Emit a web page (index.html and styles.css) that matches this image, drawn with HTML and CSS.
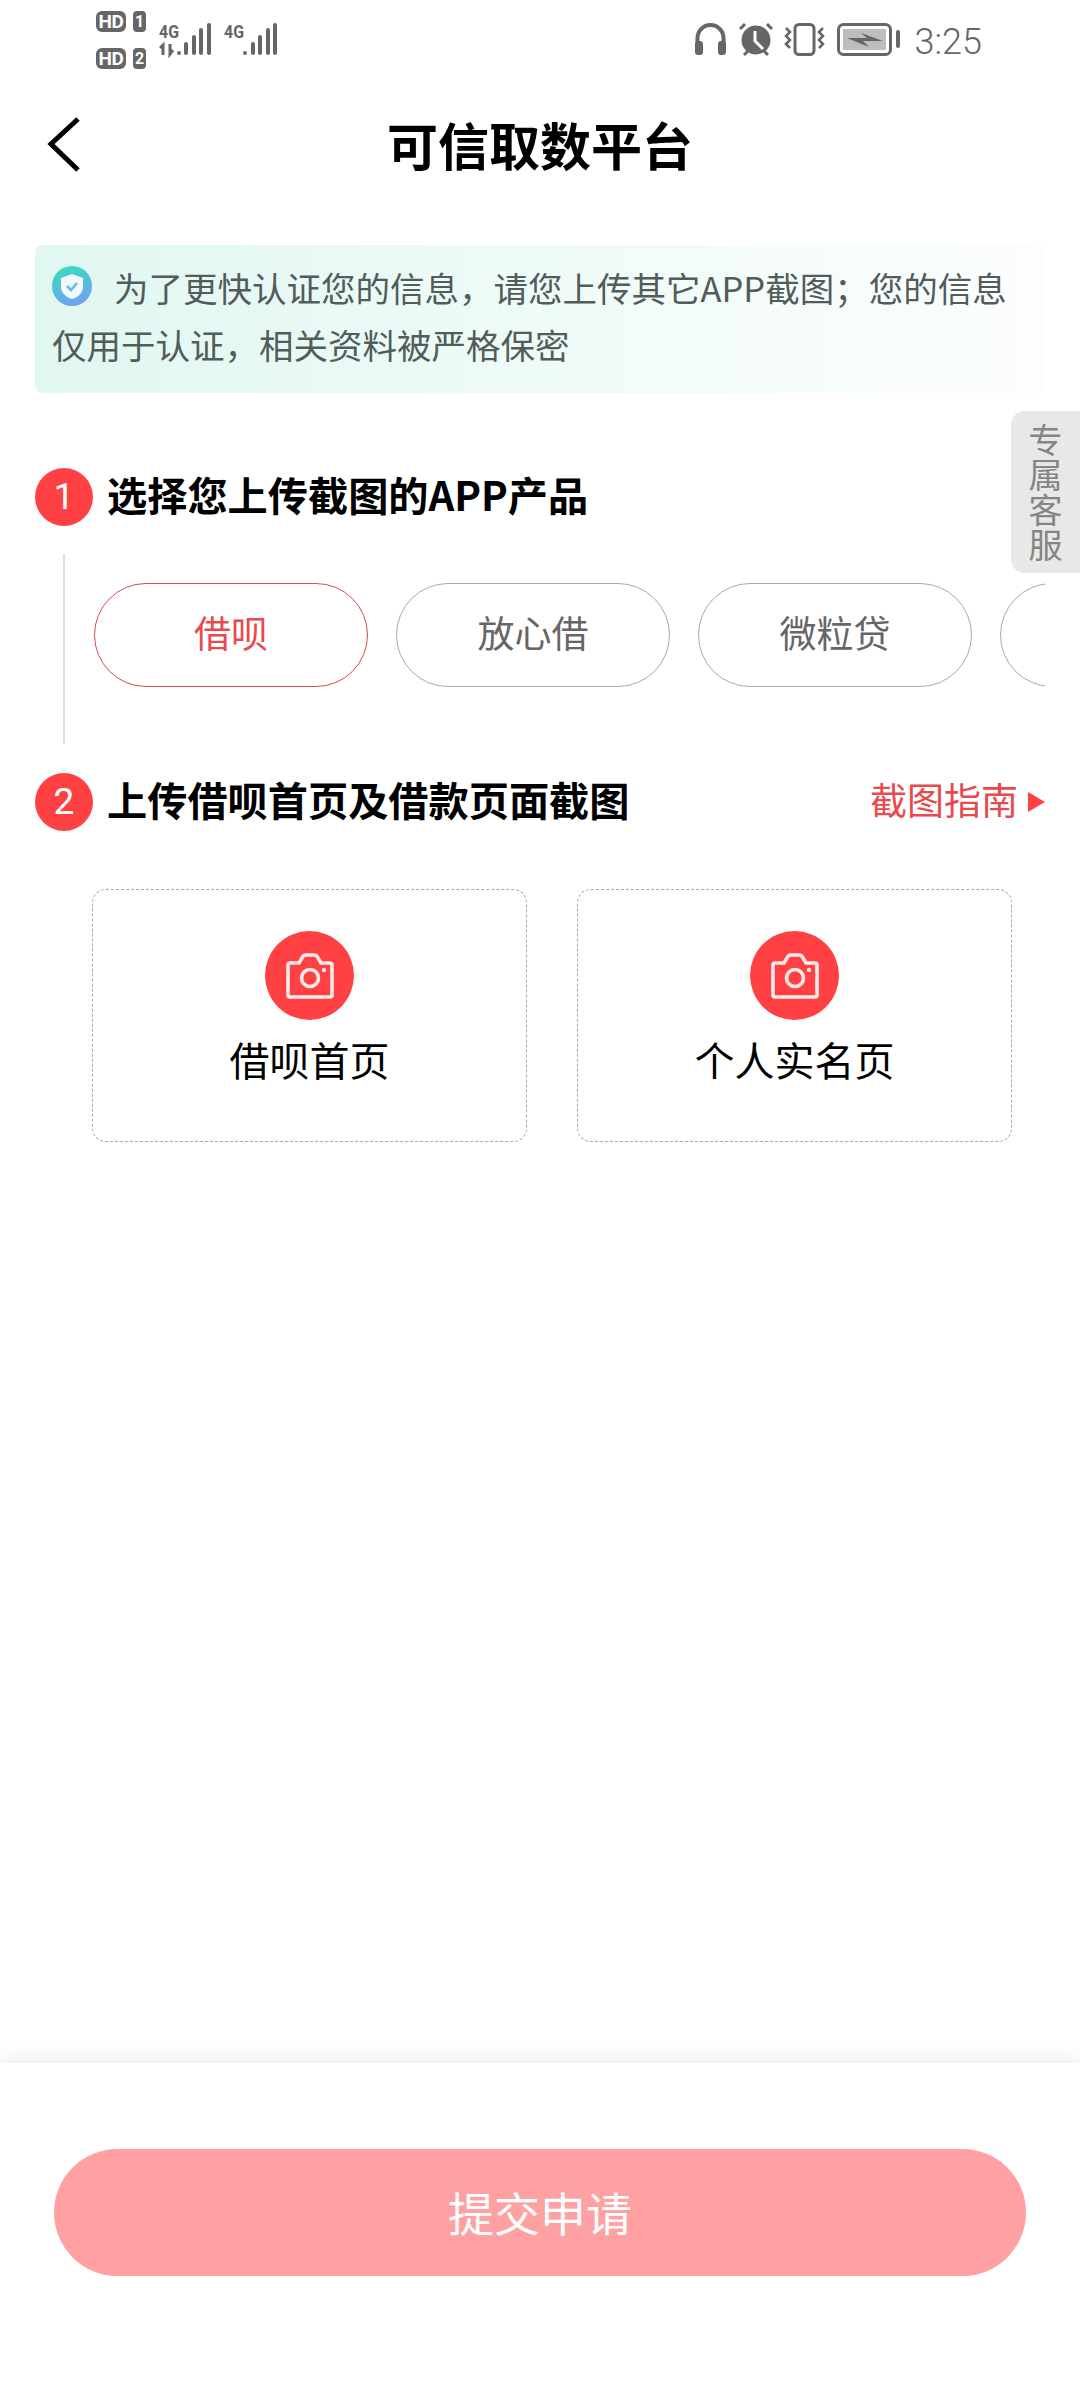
FILE: index.html
```html
<!DOCTYPE html>
<html lang="zh-CN">
<head>
<meta charset="utf-8">
<title>可信取数平台</title>
<link rel="stylesheet" href="styles.css">
</head>
<body>
<div class="page">
  <div class="statusbar">
    <div class="sims">
      <div class="sim"><span class="hd">HD</span><span class="num">1</span></div>
      <div class="sim"><span class="hd">HD</span><span class="num">2</span></div>
    </div>
    <svg class="signal" width="120" height="40" viewBox="159 20 120 40">
      <text class="g4" x="159" y="38" textLength="20" lengthAdjust="spacingAndGlyphs">4G</text>
      <text class="g4" x="224" y="38" textLength="20" lengthAdjust="spacingAndGlyphs">4G</text>
      <path class="arrows" d="M163 55V45L160 48M170 44V54L173 50"/>
      <rect class="bar" x="177" y="51" width="4" height="4" rx="2"/>
      <rect class="bar" x="184" y="42" width="4" height="13" rx="2"/>
      <rect class="bar" x="192" y="35" width="4" height="20" rx="2"/>
      <rect class="bar" x="199" y="28" width="4" height="27" rx="2"/>
      <rect class="bar" x="207" y="23" width="4" height="32" rx="2"/>
      <rect class="bar" x="243" y="51" width="4" height="4" rx="2"/>
      <rect class="bar" x="251" y="42" width="4" height="13" rx="2"/>
      <rect class="bar" x="258" y="35" width="4" height="20" rx="2"/>
      <rect class="bar" x="266" y="28" width="4" height="27" rx="2"/>
      <rect class="bar" x="273" y="23" width="4" height="32" rx="2"/>
    </svg>
    <div class="status-right">
      <svg width="206" height="40" viewBox="696 20 206 40">
        <path class="st4" d="M698.5 46V38a13 13 0 0 1 26 0V46"/>
        <rect class="bar" x="696" y="41" width="8" height="14" rx="3"/>
        <rect class="bar" x="719" y="41" width="8" height="14" rx="3"/>
        <circle class="bar" cx="757" cy="40" r="14.5"/>
        <path class="wh" d="M756 31V41L764 49"/>
        <path class="st3" d="M741 29L746 24M773 29L768 24M745 55L749 51M769 55L765 51"/>
        <rect class="st3" x="796" y="24.5" width="19" height="30" rx="4"/>
        <path class="st25" d="M787 28L791 32L787 36L791 40L787 44L791 48M824 28L820 32L824 36L820 40L824 44L820 48"/>
        <rect class="st3" x="839.5" y="24.5" width="52" height="30" rx="5"/>
        <rect class="batt" x="844" y="29" width="43" height="21" rx="1"/>
        <path class="bar" d="M848 38H868L862 33L884 41H864L870 47Z"/>
        <rect class="bar" x="897" y="30" width="4" height="18" rx="2"/>
      </svg>
      <span class="time">3:25</span>
    </div>
  </div>

  <header class="nav">
    <svg class="back" width="34" height="58" viewBox="0 0 34 58"><path d="M31 3L4 28L31 54"/></svg>
    <h1 class="nav-title">可信取数平台</h1>
  </header>

  <main class="main">
    <div class="notice">
      <svg class="shield" width="40" height="40" viewBox="0 0 40 40">
        <defs><linearGradient id="sg" x1="0.3" y1="0" x2="0.6" y2="1"><stop offset="0" stop-color="#38dcbf"/><stop offset="1" stop-color="#73a0f2"/></linearGradient></defs>
        <circle cx="20" cy="20" r="20" fill="url(#sg)"/>
        <path d="M20 8L31 12V21C31 27 26 31 20 33C14 31 9 27 9 21V12Z" fill="#f3f8fc"/>
        <path d="M15 20L19 24L25 17" fill="none" stroke="#5cc3dc" stroke-width="2.6"/>
      </svg>为了更快认证您的信息，请您上传其它APP截图；您的信息仅用于认证，相关资料被严格保密
    </div>

    <div class="step step-first">
      <span class="step-num">1</span>
      <h2 class="step-title">选择您上传截图的APP产品</h2>
    </div>
    <div class="step-body">
      <div class="pills">
        <div class="pill pill-active">借呗</div>
        <div class="pill">放心借</div>
        <div class="pill">微粒贷</div>
        <div class="pill"></div>
      </div>
    </div>

    <div class="step">
      <span class="step-num">2</span>
      <h2 class="step-title">上传借呗首页及借款页面截图</h2>
      <a class="guide">截图指南<span class="guide-arrow"></span></a>
    </div>

    <div class="cards">
      <div class="card">
        <span class="cam">
          <svg width="48" height="46" viewBox="0 0 48 46"><path d="M4 10H13L16 5Q17 2 20 2H28Q31 2 32 5L35 10H44A2 2 0 0 1 46 12V42A2 2 0 0 1 44 44H4A2 2 0 0 1 2 42V12A2 2 0 0 1 4 10Z"/><circle cx="24" cy="25" r="8.5"/><circle class="dot" cx="38" cy="17" r="2.2"/></svg>
        </span>
        <span class="card-label">借呗首页</span>
      </div>
      <div class="card">
        <span class="cam">
          <svg width="48" height="46" viewBox="0 0 48 46"><path d="M4 10H13L16 5Q17 2 20 2H28Q31 2 32 5L35 10H44A2 2 0 0 1 46 12V42A2 2 0 0 1 44 44H4A2 2 0 0 1 2 42V12A2 2 0 0 1 4 10Z"/><circle cx="24" cy="25" r="8.5"/><circle class="dot" cx="38" cy="17" r="2.2"/></svg>
        </span>
        <span class="card-label">个人实名页</span>
      </div>
    </div>
  </main>

  <aside class="service">专属客服</aside>

  <footer class="footer">
    <button class="submit">提交申请</button>
  </footer>
</div>
</body>
</html>
```
FILE: styles.css
```css
* { box-sizing: border-box; }
html, body { margin: 0; padding: 0; background: #fff; }
body { font-family: "Noto Sans CJK SC", "Noto Sans", sans-serif; }
.page { position: relative; width: 1080px; height: 2400px; display: flex; flex-direction: column; overflow: hidden; }

.statusbar { height: 80px; flex: none; display: flex; align-items: center; padding: 0 98px 0 96px; }
.sims { display: flex; flex-direction: column; gap: 16px; margin-right: 13px; }
.sim { display: flex; gap: 7px; height: 21px; }
.hd, .num { background: #666; color: #fff; font: 700 19px/21px "Roboto", sans-serif; text-align: center; border-radius: 6px; letter-spacing: -0.5px; }
.hd { width: 30px; }
.num { width: 13px; border-radius: 4px; font-size: 16px; letter-spacing: 0; }
.signal { display: block; }
.g4 { font: 700 19px "Roboto", sans-serif; fill: #666; }
.arrows { fill: none; stroke: #666; stroke-width: 3; }
.bar { fill: #666; }
.status-right { margin-left: auto; display: flex; align-items: center; gap: 14px; }
.status-right svg { display: block; }
.st4 { fill: none; stroke: #666; stroke-width: 4; }
.st3 { fill: none; stroke: #666; stroke-width: 3; }
.st25 { fill: none; stroke: #666; stroke-width: 2.5; }
.wh { fill: none; stroke: #fff; stroke-width: 3; }
.batt { fill: #bdbdbd; }
.time { font: 300 36px/40px "Roboto", sans-serif; color: #666; margin-top: 3px; }

.nav { height: 132px; flex: none; position: relative; display: flex; align-items: center; justify-content: center; }
.back { position: absolute; left: 47px; top: 36px; }
.back path { fill: none; stroke: #000; stroke-width: 5; }
.nav-title { margin: 0 0 5px; font-size: 51px; font-weight: 700; line-height: 60px; color: #000; }

.main { flex: 1; padding-top: 33px; }
.notice { margin: 0 35px; height: 148px; padding: 14px 17px 0; border-radius: 8px; background: linear-gradient(90deg, #e1f7f1 0%, #effbf8 50%, #fcfdfe 100%); font-size: 34.5px; line-height: 57px; color: #525c5a; }
.shield { display: inline-block; vertical-align: -4px; margin-right: 22px; }

.step { display: flex; align-items: center; height: 58px; margin: 29px 35px 0; }
.step-first { margin-top: 75px; }
.step-num { width: 58px; height: 58px; flex: none; border-radius: 50%; background: #ff4144; color: #fff; font: 400 37px/58px "Roboto", sans-serif; text-align: center; }
.step-title { margin: 0 0 6px 14px; font-size: 40.2px; font-weight: 700; line-height: 58px; color: #000; }
.guide { margin: 0 0 7px auto; display: flex; align-items: center; font-size: 37px; line-height: 50px; color: #e8494d; }
.guide-arrow { width: 0; height: 0; margin: 7px 0 0 10px; border-left: 17px solid #ff4144; border-top: 10px solid transparent; border-bottom: 10px solid transparent; }

.step-body { margin: 28px 35px 0 63px; height: 190px; padding: 29px 0 0 29px; border-left: 2px solid #dedede; }
.pills { display: flex; gap: 28px; overflow: hidden; }
.pill { flex: none; width: 274px; height: 104px; border: 1px solid #a8a8a8; border-radius: 52px; font-size: 37px; line-height: 96px; color: #666; text-align: center; }
.pill-active { border-color: #cc4f52; color: #e8494d; }

.cards { display: flex; gap: 50px; margin: 58px 0 0 92px; }
.card { width: 435px; height: 253px; border: 1px dashed #aaa; border-radius: 14px; padding-top: 41px; display: flex; flex-direction: column; align-items: center; }
.cam { width: 89px; height: 89px; border-radius: 50%; background: #ff4144; display: flex; align-items: center; justify-content: center; }
.cam svg { display: block; }
.cam path, .cam circle { fill: none; stroke: #ffe9e9; stroke-width: 3.6; }
.cam .dot { fill: #ffe9e9; stroke: none; }
.card-label { margin-top: 11px; font-size: 40px; line-height: 56px; color: #000; }

.service { position: absolute; top: 411px; right: 0; width: 69px; height: 162px; padding-top: 1px; border-radius: 14px 0 0 14px; background: #e8e8e8; color: #858585; font-size: 34px; line-height: 69px; letter-spacing: 1px; writing-mode: vertical-rl; text-orientation: upright; text-align: center; }

.footer { height: 337px; flex: none; position: relative; background: #fff; box-shadow: 0 -4px 22px rgba(0, 0, 0, 0.08); padding: 86px 54px 0; }
.submit { display: block; width: 972px; height: 127px; border: 0; border-radius: 64px; background: #ffa1a3; color: #fff; font-family: inherit; font-size: 46px; padding: 0 0 4px; }
```
